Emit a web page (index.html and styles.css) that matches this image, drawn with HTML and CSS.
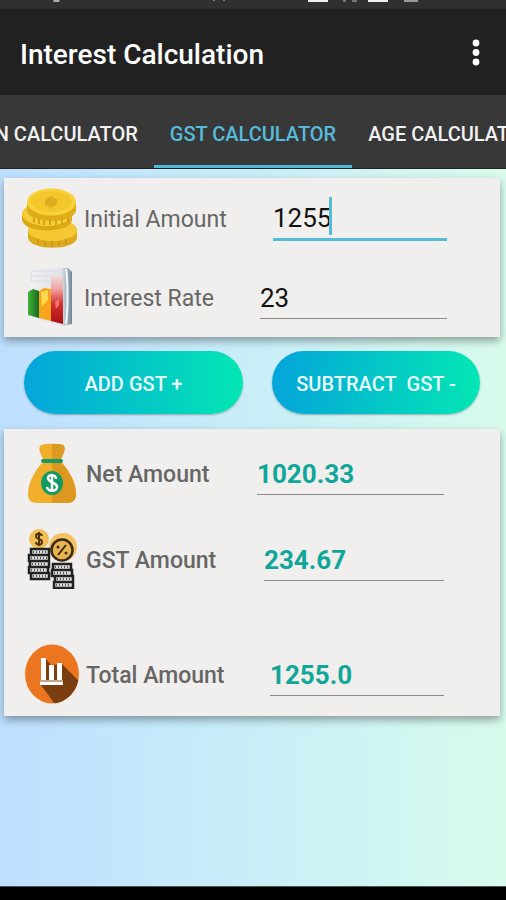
FILE: index.html
```
<!DOCTYPE html>
<html lang="en">
<head>
    <meta charset="UTF-8">
    <meta name="viewport" content="width=device-width, initial-scale=1.0">
    <title>Interest Calculation</title>
    <link rel="stylesheet" href="styles.css">
</head>
<body>
    <div class="status">
        <svg width="506" height="9" viewBox="0 0 506 9" aria-hidden="true">
            <path d="M53 0h7l-1 2h-5z" fill="#aaa"/>
            <path d="M213 0h2v1h-2zM223 0h2v1h-2z" fill="#777"/>
            <path d="M308 0h20v2h-20zM368 0h20v2h-20z" fill="#eee"/>
            <path d="M343 0h3v2h-3zM352 0h5v2h-5z" fill="#777"/>
            <path d="M404 0h14v2h-14z" fill="#999"/>
        </svg>
    </div>

    <header class="appbar">
        <h1>Interest Calculation</h1>
        <button class="menu" aria-label="More options">
            <svg width="8" height="28" viewBox="0 0 8 28" fill="#fff">
                <circle cx="4" cy="5" r="3.4"/>
                <circle cx="4" cy="14.500" r="3.4"/>
                <circle cx="4" cy="24" r="3.4"/>
            </svg>
        </button>
    </header>

    <nav class="tabs">
        <button class="tab tab-prev">LOAN CALCULATOR</button>
        <button class="tab active">GST CALCULATOR</button>
        <button class="tab tab-next">AGE CALCULATOR</button>
    </nav>

    <main>
        <div class="card entry">
            <div class="row">
                <svg class="icon" viewBox="0 0 56 60" aria-hidden="true">
                    <path d="M6 42v8c2 13 47 13 49 0v-10z" fill="#dcaa1c"/>
                    <ellipse cx="30.500" cy="42" rx="24.500" ry="11" fill="#f4c833"/>
                    <path d="M0 25v7c2 14 48 14 50 0v-7z" fill="#dba815"/>
                    <ellipse cx="25" cy="26" rx="25" ry="12" fill="#f6cd36"/>
                    <path d="M5 14v9c3 13 46 13 49 0v-9z" fill="#dfab17"/>
                    <ellipse cx="29.500" cy="14" rx="24.500" ry="13.500" fill="#f9d23a"/>
                    <ellipse cx="29.500" cy="13.500" rx="20.500" ry="10.500" fill="#f3c62b"/>
                    <path d="M29 8l7 4-2 5-5 3-6-3v-5z" fill="#dcae1e"/>
                    <path d="M12 30v5M17 31v5M22 32v5M28 32v5M34 32v5M40 31v5M46 29v5M16 51v5M23 53v5M30 53v6M37 53v5M44 51v5" stroke="#c99718" stroke-width="1.500"/>
                </svg>
                <label for="initial">Initial Amount</label>
                <div class="field focused">
                    <input type="text" id="initial" value="1255" inputmode="decimal">
                    <span class="caret"></span>
                </div>
            </div>
            <div class="row">
                <svg class="icon" viewBox="0 0 56 60" aria-hidden="true">
                    <defs>
                        <linearGradient id="paper" x1="0" x2="1">
                            <stop offset="0" stop-color="#f1f1f3"/>
                            <stop offset=".75" stop-color="#dde3e8"/>
                            <stop offset="1" stop-color="#6c8796"/>
                        </linearGradient>
                        <linearGradient id="green" x1="0" x2="1">
                            <stop offset="0" stop-color="#46b23b"/>
                            <stop offset="1" stop-color="#126b1c"/>
                        </linearGradient>
                        <linearGradient id="red" x1="0" y1="0" x2="0" y2="1">
                            <stop offset="0" stop-color="#f1e4e5"/>
                            <stop offset=".3" stop-color="#efa3a2"/>
                            <stop offset=".6" stop-color="#d5302f"/>
                            <stop offset="1" stop-color="#a80d12"/>
                        </linearGradient>
                    </defs>
                    <path d="M8 2l38-1 4 4v52l-9 2-33-8z" fill="url(#paper)"/>
                    <path d="M9 4h26M9 9h26M9 14h22M9 4v10" stroke="#dcdce3" stroke-width="1" fill="none"/>
                    <path d="M44 2c2 10 2 42 0 55" stroke="#f4f8fa" stroke-width="2" fill="none"/>
                    <path d="M6 25l5-3 6 2v27l-11-3z" fill="url(#green)"/>
                    <path d="M17 24l5-3 7 1v32l-12-3z" fill="#f8a51b"/>
                    <path d="M19 25l7-2v10l-6 6z" fill="#fcd84e"/>
                    <path d="M29 10l6-3 6 4v46l-12-3z" fill="url(#red)"/>
                    <path d="M33 35l4-3v6l-3 4z" fill="#ef7672"/>
                </svg>
                <label for="rate">Interest Rate</label>
                <div class="field wide">
                    <input type="text" id="rate" value="23" inputmode="decimal">
                </div>
            </div>
        </div>

        <div class="actions">
            <button class="pill add">ADD GST +</button>
            <button class="pill subtract">SUBTRACT&nbsp; GST -</button>
        </div>

        <div class="card results">
            <div class="row">
                <svg class="icon" viewBox="0 0 56 60" aria-hidden="true">
                    <path d="M16 3c2-3 22-3 24 0 2 4-1 8-3 13H19c-2-5-5-9-3-13z" fill="#f0ae2b"/>
                    <path d="M28 1c6 0 11 0 12 2 2 4-1 8-3 13h-9z" fill="#dd9a20"/>
                    <path d="M19 19h18c6 6 15 19 15 32 0 6-3 9-9 9H13c-6 0-9-3-9-9 0-13 9-26 15-32z" fill="#f0ae2b"/>
                    <path d="M28 19h9c6 6 15 19 15 32 0 6-3 9-9 9H28z" fill="#dd981f"/>
                    <rect x="17" y="16" width="22" height="4" rx="2" fill="#159a62"/>
                    <ellipse cx="28" cy="40" rx="11" ry="12" fill="#109b63"/>
                    <path d="M32 36c0-5-8-5-8-1 0 5 9 4 9 9 0 5-9 5-10 0M28 31v18" stroke="#fff" stroke-width="2.500" fill="none"/>
                </svg>
                <label for="net">Net Amount</label>
                <div class="field wide">
                    <input type="text" id="net" value="1020.33" readonly>
                </div>
            </div>
            <div class="row">
                <svg class="icon" viewBox="0 0 56 60" aria-hidden="true">
                    <circle cx="15" cy="10" r="10" fill="#f2bd57"/>
                    <path d="M18 7c-1-3-6-3-6 0 0 4 6 2 6 6 0 4-6 3-6 0M15 3v14" stroke="#4a3413" stroke-width="2" fill="none"/>
                    <circle cx="39" cy="18" r="14" fill="#f4c263"/>
                    <circle cx="38" cy="21" r="10.500" fill="#e9b452" stroke="#3a2b17" stroke-width="2.500"/>
                    <path d="M34 26l8-10" stroke="#3a2b17" stroke-width="2"/>
                    <circle cx="34" cy="18" r="1.500" fill="#3a2b17"/>
                    <circle cx="42" cy="24" r="1.500" fill="#3a2b17"/>
                    <path d="M7 20h18v6H7zM5 26h20v6H5zM6 32h19v6H6zM5 38h19v6H5zM7 44h18v6H7zM29 35h18v6H29zM28 41h20v6H28zM31 47h18v6H31zM30 53h19v6H30z" fill="#ddd" stroke="#222" stroke-width="2.500"/>
                    <path d="M9 23h14M7 29h16M8 35h14M7 41h14M9 47h14M31 38h14M30 44h14M33 50h14M32 56h14" stroke="#555" stroke-width="2" stroke-dasharray="1 2"/>
                </svg>
                <label for="gst">GST Amount</label>
                <div class="field medium">
                    <input type="text" id="gst" value="234.67" readonly>
                </div>
            </div>
            <div class="row total">
                <svg class="icon" viewBox="0 0 56 60" aria-hidden="true">
                    <defs>
                        <clipPath id="disc"><ellipse cx="28" cy="30" rx="27" ry="29.500"/></clipPath>
                    </defs>
                    <ellipse cx="28" cy="30" rx="27" ry="29.500" fill="#ec7620"/>
                    <path d="M22 15l5 6 11-1 24 24v30H41L17 41z" fill="#7b3e10" clip-path="url(#disc)"/>
                    <path d="M17 14h5v22h-5zM25 21h5v15h-5zM33 19h5v17h-5zM16 38h23v3H16z" fill="#fff"/>
                    <path d="M16 36h23v2H16z" fill="#c9a58b"/>
                </svg>
                <label for="total">Total Amount</label>
                <div class="field">
                    <input type="text" id="total" value="1255.0" readonly>
                </div>
            </div>
        </div>
    </main>

    <footer class="navbar"></footer>
</body>
</html>
```

FILE: styles.css
```
* { box-sizing: border-box; }
body { margin: 0; min-height: 100vh; display: flex; flex-direction: column; font-family: Roboto, "Liberation Sans", sans-serif; background: #000; }
button { padding: 0; border: none; background: none; font-family: inherit; cursor: pointer; }

.status { height: 9px; background: #303030; overflow: hidden; }
.status svg { display: block; }

.appbar { height: 86px; padding: 0 26px 0 20px; display: flex; align-items: center; justify-content: space-between; background: #212121; }
.appbar h1 { margin: 0; padding-top: 6px; font-size: 28px; line-height: 36px; font-weight: 500; color: #fff; }
.menu { display: flex; }
.menu svg { display: block; }

/* neighbouring tabs run off both edges */
.tabs { height: 74px; display: grid; grid-template-columns: minmax(0, 1fr) auto minmax(0, 1fr); background: #383838; border-bottom: 1px solid #222; }
.tab { display: flex; align-items: center; padding: 7px 16px 0; overflow: hidden; font-size: 20px; font-weight: 500; white-space: nowrap; color: #f2f2f2; border-bottom: 3px solid transparent; }
.tab-prev { justify-content: flex-end; }
.tab-next { justify-content: flex-start; }
.tab.active { color: #56bbdb; border-bottom-color: #4fb9da; }

main { flex: 1; padding: 9px 6px 0 4px; background: linear-gradient(to right, #bedfff, #c9eef8 50%, #d8fbec); }

.card { background: #f1efed; box-shadow: 0 4px 8px rgba(0, 0, 0, 0.35); }
.entry { padding: 10px 53px 10px 18px; }
.results { padding: 14px 56px 12px 20px; }

.row { display: flex; align-items: center; gap: 6px; height: 60px; }
.entry .row + .row { margin-top: 19px; }
.results .row + .row { margin-top: 26px; }
.results .row.total { margin-top: 55px; }
.icon { flex: none; width: 56px; height: 60px; }
.row label { flex: 1; padding-top: 2px; font-size: 23px; white-space: nowrap; color: #666; }
.results label { font-weight: 500; }

.field { position: relative; flex: none; width: 174px; border-bottom: 1px solid #8a8a8a; }
.field.medium { width: 180px; }
.field.wide { width: 187px; }
.field.focused { border-bottom: 3px solid #52bcd6; }
.field input { display: block; width: 100%; height: 42px; padding: 2px 0 0; border: none; outline: none; background: none; font-family: inherit; font-size: 26px; color: #111; }
.results input { font-weight: 700; color: #10a79a; }
.caret { position: absolute; left: 56px; top: 1px; width: 3px; height: 38px; background: #52bcd6; }

.actions { display: flex; gap: 29px; padding: 14px 20px 15px; }
.pill { height: 63px; padding-top: 2px; border-radius: 32px; font-size: 20px; font-weight: 500; color: #e9fbfd; background: linear-gradient(to right, #04a5da, #03e6b4); box-shadow: 0 1px 2px rgba(0, 0, 0, 0.3); }
.add { flex: 219; }
.subtract { flex: 208; }

.navbar { height: 14px; background: #000; border-top: 1px solid #555; }
```
